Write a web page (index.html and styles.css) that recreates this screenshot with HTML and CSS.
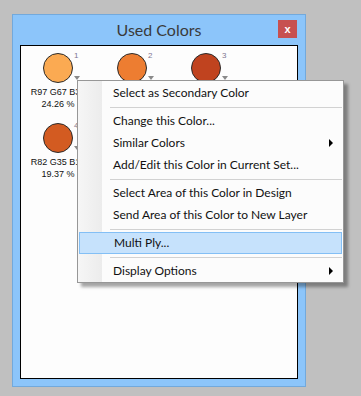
FILE: index.html
```html
<!DOCTYPE html>
<html lang="en">
<head>
    <meta charset="UTF-8">
    <meta name="viewport" content="width=device-width, initial-scale=1.0">
    <title>Used Colors</title>
    <link rel="stylesheet" href="styles.css">
</head>
<body>

    <div class="window">
        <div class="titlebar">
            <span class="title">Used Colors</span>
            <button class="close-btn">x</button>
        </div>

        <div class="panel">
            <div class="swatches">
                <div class="swatch">
                    <div class="dot" style="background-color: #fbaa52;"></div>
                    <span class="num">1</span>
                    <span class="drop"></span>
                    <div class="info">R97 G67 B34<br>24.26 %</div>
                </div>
                <div class="swatch">
                    <div class="dot" style="background-color: #ed7d31;"></div>
                    <span class="num">2</span>
                    <span class="drop"></span>
                </div>
                <div class="swatch">
                    <div class="dot" style="background-color: #c0431f;"></div>
                    <span class="num">3</span>
                    <span class="drop"></span>
                </div>
                <div class="swatch">
                    <div class="dot" style="background-color: #d35b21;"></div>
                    <span class="num">4</span>
                    <span class="drop"></span>
                    <div class="info">R82 G35 B13<br>19.37 %</div>
                </div>
            </div>
        </div>
    </div>

    <ul class="context-menu">
        <li>Select as Secondary Color</li>
        <li class="sep"></li>
        <li>Change this Color...</li>
        <li class="sub">Similar Colors</li>
        <li>Add/Edit this Color in Current Set...</li>
        <li class="sep"></li>
        <li>Select Area of this Color in Design</li>
        <li>Send Area of this Color to New Layer</li>
        <li class="sep"></li>
        <li class="active">Multi Ply...</li>
        <li class="sep"></li>
        <li class="sub">Display Options</li>
    </ul>

</body>
</html>
```

FILE: styles.css
```css
body {
    margin: 0;
    padding: 14px 0 0 12px;
    background-color: #c0c0c0;
    font-family: "Lato", "Noto Sans", sans-serif;
}

.window {
    width: 292px;
    height: 371px;
    background-color: #8cc5fa;
    border: 1px solid #72a9dc;
    display: flex;
    flex-direction: column;
}

.titlebar {
    height: 30px;
    display: grid;
    grid-template-columns: 1fr auto 1fr;
    align-items: start;
}

.title {
    grid-column: 2;
    font-size: 16px;
    line-height: 30px;
    color: #3a3a3a;
}

.close-btn {
    grid-column: 3;
    justify-self: end;
    margin: 5px 8px 0 0;
    width: 19px;
    height: 18px;
    padding: 0;
    border: none;
    background-color: #c75050;
    color: #fff;
    font-family: "Liberation Sans", sans-serif;
    font-size: 11px;
    font-weight: bold;
    line-height: 16px;
}

.panel {
    flex: 1;
    margin: 0 7px 7px 7px;
    background-color: #fdfdfd;
    border: 1px solid #000;
    padding-top: 7px;
}

.swatches {
    display: grid;
    grid-template-columns: repeat(3, 74px);
    grid-auto-rows: 70px;
}

.swatch {
    position: relative;
    display: flex;
    flex-direction: column;
    align-items: center;
}

.dot {
    width: 28px;
    height: 28px;
    border: 1px solid #2b2b2b;
    border-radius: 50%;
}

.num {
    position: absolute;
    left: 53px;
    top: -2px;
    font-family: "Liberation Sans", sans-serif;
    font-size: 8px;
    color: #7d7690;
}

.drop {
    position: absolute;
    left: 53px;
    top: 23px;
    width: 0;
    height: 0;
    border-left: 3px solid transparent;
    border-right: 3px solid transparent;
    border-top: 4px solid #8a8a8a;
}

.info {
    margin-top: 3px;
    font-family: "Liberation Sans", sans-serif;
    font-size: 9px;
    line-height: 12px;
    text-align: center;
    color: #111;
    white-space: nowrap;
}

.context-menu {
    position: absolute;
    left: 77px;
    top: 80px;
    width: 265px;
    margin: 0;
    padding: 1px 0 0 0;
    list-style: none;
    border: 1px solid #979797;
    background: linear-gradient(to right, #f6f6f6 0, #ececec 24px, #fcfcfc 24px);
    box-shadow: 4px 4px 3px rgba(0, 0, 0, 0.35);
    font-size: 12px;
    color: #111;
}

.context-menu li {
    position: relative;
    height: 22px;
    line-height: 22px;
    padding-left: 35px;
}

.context-menu li.sep {
    height: 1px;
    margin: 3px 1px 2px 32px;
    padding: 0;
    background-color: #d2d2d2;
}

.context-menu li.active {
    margin: 0 1px;
    height: 20px;
    line-height: 20px;
    padding-left: 34px;
    background-color: #c6e2fc;
    border: 1px solid #83bff5;
}

.context-menu li.sub::after {
    content: "";
    position: absolute;
    right: 10px;
    top: 7px;
    border-top: 4px solid transparent;
    border-bottom: 4px solid transparent;
    border-left: 4px solid #000;
}
```
